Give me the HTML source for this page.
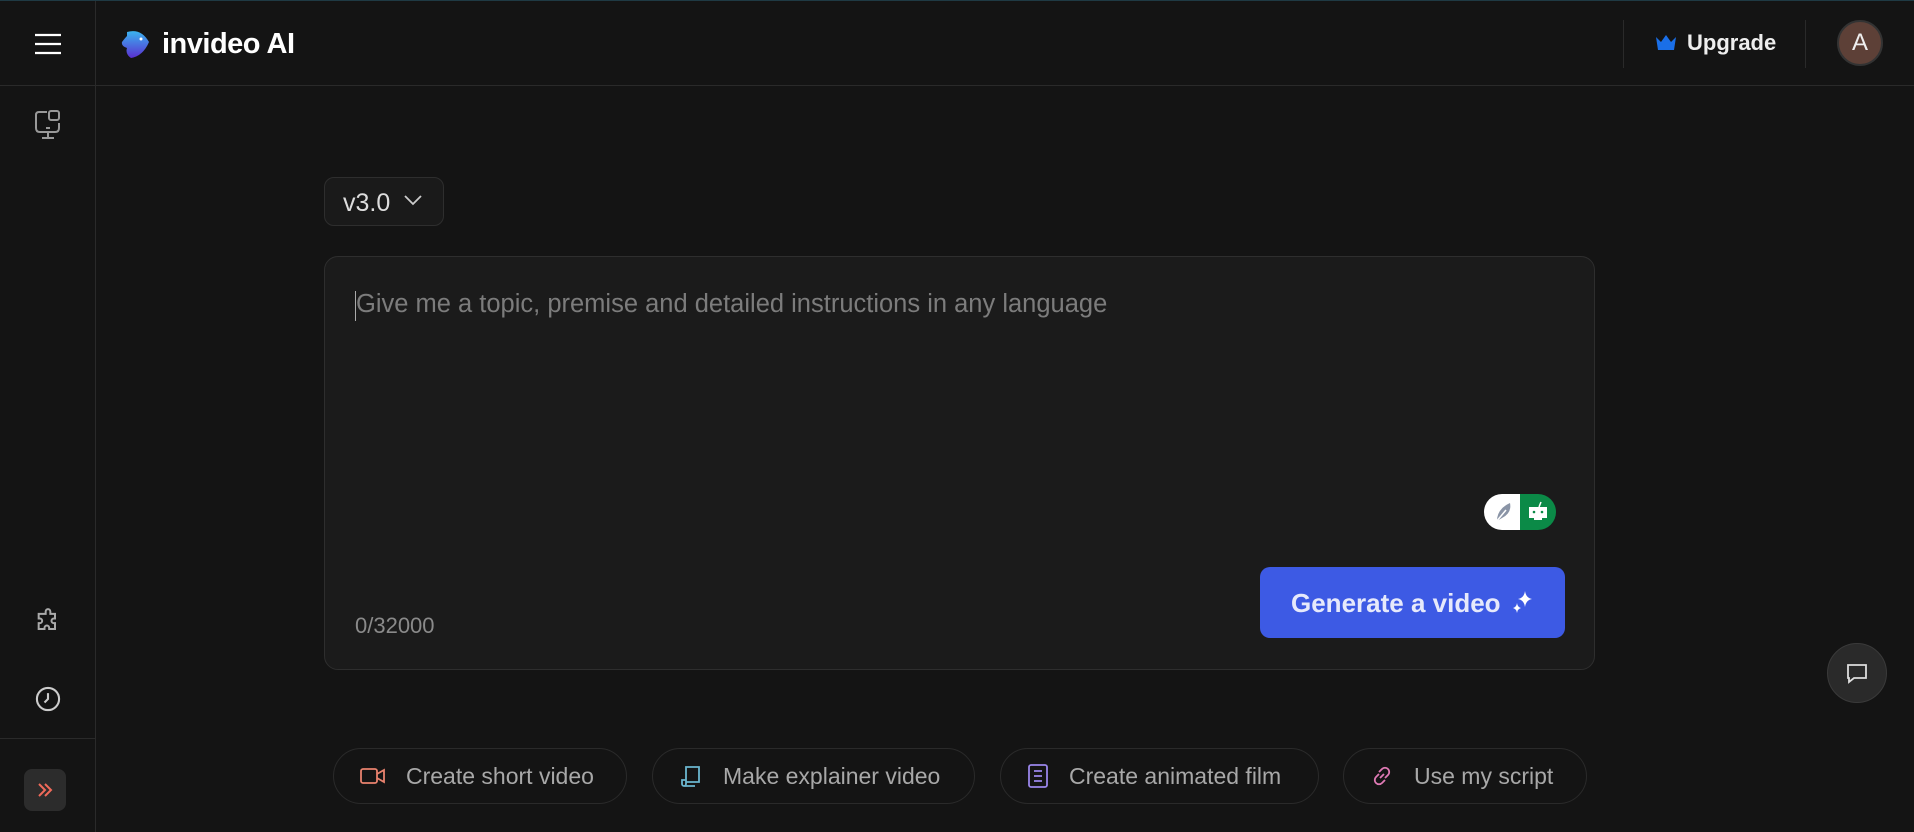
<!DOCTYPE html>
<html><head><meta charset="utf-8"><style>
*{box-sizing:border-box;margin:0;padding:0}
body{width:1914px;height:832px;background:#141414;font-family:"Liberation Sans",sans-serif;color:#fff;position:relative;overflow:hidden;border-top:1px solid #1f3a44}
.abs{position:absolute}
.hline{position:absolute;left:0;right:0;top:84px;height:1px;background:#2a2a2a}
.vline{position:absolute;left:95px;top:0;bottom:0;width:1px;background:#2a2a2a}
.chip{position:absolute;top:747px;height:56px;border:1px solid #2a2a2a;border-radius:28px;display:flex;align-items:center;padding-left:26px;font-size:23px;color:#a8a8a8;gap:20px;white-space:nowrap}
</style></head><body>
<div class="hline"></div><div class="vline"></div>
<svg class="abs" style="left:34px;top:31px" width="28" height="24"><g stroke="#fff" stroke-width="2.2"><line x1="1" y1="3" x2="27" y2="3"/><line x1="1" y1="12" x2="27" y2="12"/><line x1="1" y1="21" x2="27" y2="21"/></g></svg>
<svg class="abs" style="left:119px;top:27px" width="32" height="32" viewBox="0 0 32 32"><defs><linearGradient id="g" x1="0" y1="0" x2="0" y2="1"><stop offset="0" stop-color="#3ab4f0"/><stop offset="1" stop-color="#5a2fd0"/></linearGradient></defs><path d="M8 4 Q22 0 30 14 Q24 28 12 30 Q6 26 8 20 Q2 18 3 14 Q6 10 8 8Z" fill="url(#g)"/><circle cx="22" cy="11" r="1.5" fill="#fff"/></svg>
<div class="abs" style="left:162px;top:27px;font-size:29px;font-weight:bold;letter-spacing:-0.5px">invideo AI</div>
<div class="abs" style="left:1623px;top:19px;width:1px;height:48px;background:#2a2a2a"></div>
<svg class="abs" style="left:1656px;top:34px" width="20" height="16" viewBox="0 0 20 16"><path d="M0 2 L5 7 L10 0 L15 7 L20 2 L18 15 L2 15Z" fill="#1a6fe8"/></svg>
<div class="abs" style="left:1687px;top:29px;font-size:22px;font-weight:bold;color:#eee">Upgrade</div>
<div class="abs" style="left:1805px;top:19px;width:1px;height:48px;background:#2a2a2a"></div>
<div class="abs" style="left:1837px;top:19px;width:46px;height:46px;border-radius:50%;background:#5d4037;border:2px solid #333;text-align:center;line-height:42px;font-size:24px;color:#eee">A</div>
<svg class="abs" style="left:33px;top:108px" width="30" height="32" viewBox="0 0 30 32" fill="none" stroke="#999" stroke-width="2"><path d="M14 3 H6 Q3 3 3 6 V19 Q3 23 7 23 H22 Q26 23 26 19 V14"/><rect x="16" y="2" width="10" height="9" rx="2"/><line x1="15" y1="23" x2="15" y2="29"/><line x1="9" y1="29" x2="21" y2="29"/><line x1="13" y1="19" x2="17" y2="19"/></svg>
<svg class="abs" style="left:34px;top:607px" width="28" height="28" viewBox="0 0 24 24" fill="none" stroke="#aaa" stroke-width="1.7"><path d="M10 3a2 2 0 0 1 4 0v2h4v4h-1a2 2 0 0 0 0 4h1v5h-5v-1a2 2 0 0 0-4 0v1H4v-5h1a2 2 0 0 0 0-4H4V5h6z"/></svg>
<svg class="abs" style="left:34px;top:684px" width="28" height="28" viewBox="0 0 24 24" fill="none" stroke="#ccc" stroke-width="1.8"><circle cx="12" cy="12" r="9.5"/><path d="M12 7v5l-3 3"/></svg>
<div class="abs" style="left:0;top:737px;width:95px;height:1px;background:#2a2a2a"></div>
<div class="abs" style="left:24px;top:768px;width:42px;height:42px;border-radius:8px;background:#2c2c2c"></div>
<svg class="abs" style="left:35px;top:779px" width="20" height="20" viewBox="0 0 20 20" fill="none" stroke="#f06a5a" stroke-width="2"><path d="M4 4l6 6-6 6M10 4l6 6-6 6"/></svg>
<div class="abs" style="left:324px;top:176px;width:120px;height:49px;border:1px solid #2e2e2e;border-radius:10px;background:#1a1a1a;font-size:25px;color:#ddd;padding:11px 0 0 18px">v3.0</div>
<svg class="abs" style="left:403px;top:193px" width="20" height="12" viewBox="0 0 20 12" fill="none" stroke="#ccc" stroke-width="1.8"><path d="M2 2l8 8 8-8"/></svg>
<div class="abs" style="left:324px;top:255px;width:1271px;height:414px;border:1px solid #2e2e2e;border-radius:14px;background:#1b1b1b"></div>
<div class="abs" style="left:355px;top:290px;width:1px;height:30px;background:#aaa"></div>
<div class="abs" style="left:356px;top:289px;font-size:25.5px;color:#7c7c7c">Give me a topic, premise and detailed instructions in any language</div>
<div class="abs" style="left:1484px;top:493px;width:72px;height:36px;border-radius:18px;overflow:hidden;display:flex"><div style="width:36px;background:#fff"></div><div style="width:36px;background:#0b8a47"></div></div>
<svg class="abs" style="left:1494px;top:500px" width="20" height="22" viewBox="0 0 20 22"><path d="M3 20 Q3 8 16 2 Q18 12 8 17Z" fill="#8a94a6"/><path d="M2 21 L12 9" stroke="#fff" stroke-width="1.5"/></svg>
<svg class="abs" style="left:1527px;top:499px" width="22" height="22" viewBox="0 0 22 22"><rect x="2" y="7" width="18" height="11" fill="#fff"/><rect x="7" y="18" width="8" height="2" fill="#fff"/><path d="M12 7 L14 2" stroke="#fff" stroke-width="1.5"/><circle cx="7" cy="12" r="1.3" fill="#0b8a47"/><circle cx="15" cy="12" r="1.3" fill="#0b8a47"/></svg>
<div class="abs" style="left:1260px;top:566px;width:305px;height:71px;border-radius:10px;background:#3d5ae4"></div>
<div class="abs" style="left:1291px;top:587px;font-size:26px;font-weight:bold;color:#e6e9fb">Generate a video</div>
<svg class="abs" style="left:1512px;top:590px" width="22" height="24" viewBox="0 0 22 24" fill="#fff"><path d="M13 0 Q14 7 20 8 Q14 9 13 16 Q12 9 6 8 Q12 7 13 0Z"/><path d="M5 12 Q5.5 16 9 17 Q5.5 18 5 22 Q4.5 18 1 17 Q4.5 16 5 12Z"/></svg>
<div class="abs" style="left:355px;top:612px;font-size:22px;color:#8a8a8a">0/32000</div>
<div class="abs" style="left:1827px;top:642px;width:60px;height:60px;border-radius:50%;background:#2a2a2a;border:1px solid #3a3a3a"></div>
<svg class="abs" style="left:1845px;top:660px" width="24" height="24" viewBox="0 0 24 24" fill="none" stroke="#ddd" stroke-width="1.8"><path d="M3 4h18v13H9l-5 4v-4H3z"/></svg>
<div class="chip" style="left:333px;width:294px"><svg width="26" height="20" viewBox="0 0 26 20" fill="none" stroke="#e8826e" stroke-width="1.8"><rect x="1" y="3" width="16" height="14" rx="2"/><path d="M17 8l7-4v12l-7-4"/></svg>Create short video</div>
<div class="chip" style="left:652px;width:323px"><svg width="24" height="24" viewBox="0 0 24 24" fill="none" stroke="#6bb6cf" stroke-width="1.8"><path d="M7 3h13v15H7V3zM7 18v2a2 2 0 0 1-4 0v-4h4M5 22h11"/></svg>Make explainer video</div>
<div class="chip" style="left:1000px;width:319px"><svg width="22" height="26" viewBox="0 0 22 26" fill="none" stroke="#9a86ea" stroke-width="1.8"><rect x="2" y="2" width="18" height="22" rx="2"/><path d="M7 8h8M7 13h8M7 18h8"/></svg>Create animated film</div>
<div class="chip" style="left:1343px;width:244px"><svg width="24" height="24" viewBox="0 0 24 24" fill="none" stroke="#e07ab5" stroke-width="1.8"><path d="M10 14l4-4M9 8l3-3a4 4 0 0 1 6 6l-3 3M15 16l-3 3a4 4 0 0 1-6-6l3-3"/></svg>Use my script</div>
</body></html>
